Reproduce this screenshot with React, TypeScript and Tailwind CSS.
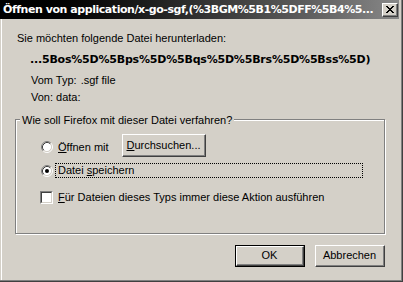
import React from "react";

const CloseGlyph = () => (
  <svg width="8" height="7" viewBox="0 0 8 7" shapeRendering="crispEdges">
    <path
      d="M0 0h2v1H0zM6 0h2v1H6zM1 1h2v1H1zM5 1h2v1H5zM2 2h4v1H2zM3 3h2v1H3zM2 4h4v1H2zM1 5h2v1H1zM5 5h2v1H5zM0 6h2v1H0zM6 6h2v1H6z"
      fill="#000"
    />
  </svg>
);

const Radio = ({ checked }: { checked?: boolean }) => (
  <svg width="12" height="12" viewBox="0 0 12 12" className="shrink-0 block">
    <circle cx="6" cy="6" r="4.5" fill="#fff" />
    <path d="M2.11 9.89A5.5 5.5 0 0 1 9.89 2.11" stroke="#808080" strokeWidth="1" fill="none" />
    <path d="M9.89 2.11A5.5 5.5 0 0 1 2.11 9.89" stroke="#ffffff" strokeWidth="1" fill="none" />
    <path d="M2.82 9.18A4.5 4.5 0 0 1 9.18 2.82" stroke="#404040" strokeWidth="1" fill="none" />
    <path d="M9.18 2.82A4.5 4.5 0 0 1 2.82 9.18" stroke="#d4d0c8" strokeWidth="1" fill="none" />
    {checked && <circle cx="6" cy="6" r="2" fill="#000" />}
  </svg>
);

const Checkbox = () => (
  <div className="w-[13px] h-[13px] shrink-0 border border-t-[#808080] border-l-[#808080] border-b-white border-r-white">
    <div className="w-full h-full bg-white border border-t-[#404040] border-l-[#404040] border-b-[#d4d0c8] border-r-[#d4d0c8]" />
  </div>
);

export default function App() {
  return (
    <div className="w-[403px] h-[282px] bg-[#d4d0c8] border-r border-b border-[#404040] overflow-hidden text-black text-[11px] leading-[13px] font-['Liberation_Sans',Arial,sans-serif]">
      <div className="h-full border-r border-b border-[#808080] flex flex-col">
        {/* Title bar */}
        <div className="h-[19px] mr-[2px] shrink-0 flex items-center pl-[3px] pr-[1px] bg-gradient-to-r from-[#000000] to-[#888888]">
          <span className="flex-1 whitespace-nowrap text-white font-bold text-[11px] tracking-[-0.45px] font-['DejaVu_Sans',sans-serif]">
            Öffnen von application/x-go-sgf,(%3BGM%5B1%5DFF%5B4%5...
          </span>
          <div className="w-[16px] h-[14px] ml-[6px] shrink-0 border border-t-white border-l-white border-r-[#404040] border-b-[#404040]">
            <div className="w-full h-full bg-[#d4d0c8] border-r border-b border-[#808080] flex items-center justify-center">
              <CloseGlyph />
            </div>
          </div>
        </div>

        {/* Body */}
        <div className="flex-1 flex flex-col ml-[1px] border-l border-white pl-[13px] pr-[15px]">
          <div className="mt-[13px] pl-[2px]">Sie möchten folgende Datei herunterladen:</div>
          <div className="mt-[8px] pl-[15px] font-bold tracking-[-0.2px] font-['DejaVu_Sans',sans-serif] whitespace-nowrap">
            ...5Bos%5D%5Bps%5D%5Bqs%5D%5Brs%5D%5Bss%5D)
          </div>
          <div className="mt-[8px] pl-[16px] flex">
            <span>Vom Typ:</span>
            <span className="ml-[4px]">.sgf file</span>
          </div>
          <div className="mt-[4px] pl-[16px] flex">
            <span>Von:</span>
            <span className="ml-[3px]">data:</span>
          </div>

          {/* Group box */}
          <div className="relative mt-[15px] w-[370px] h-[115px] border border-[#808080] shadow-[inset_1px_1px_0_#ffffff,1px_1px_0_#ffffff] pl-[25px] pt-[14px] flex flex-col">
            <span className="absolute left-[4px] top-[-6px] px-[2px] bg-[#d4d0c8] whitespace-nowrap">
              Wie soll Firefox mit dieser Datei verfahren?
            </span>

            <div className="flex items-start h-[23px]">
              <div className="mt-[7px]">
                <Radio />
              </div>
              <span className="mt-[7px] ml-[5px] w-[64px] whitespace-nowrap">
                <u className="underline-offset-[1px]">Ö</u>ffnen mit
              </span>
              <div className="w-[84px] h-[23px] border border-t-white border-l-white border-r-[#404040] border-b-[#404040]">
                <div className="w-full h-full border-r border-b border-[#808080] flex items-center justify-center">
                  <span>
                    <u className="underline-offset-[1px]">D</u>urchsuchen...
                  </span>
                </div>
              </div>
            </div>

            <div className="flex items-center mt-[6px]">
              <Radio checked />
              <div className="ml-[2px] w-[308px] h-[15px] border border-dotted border-black pl-[2px] whitespace-nowrap">
                Datei <u className="underline-offset-[1px]">s</u>peichern
              </div>
            </div>

            <div className="flex items-center mt-[13px] ml-[-1px]">
              <Checkbox />
              <span className="ml-[5px] whitespace-nowrap">
                <u className="underline-offset-[1px]">F</u>ür Dateien dieses Typs immer diese Aktion ausführen
              </span>
            </div>
          </div>

          {/* Buttons */}
          <div className="mt-[11px] flex justify-end gap-[10px] pr-[1px]">
            <div className="w-[70px] h-[22px] border border-black">
              <div className="w-full h-full border border-t-white border-l-white border-r-[#404040] border-b-[#404040]">
                <div className="w-full h-full border-r border-b border-[#808080] flex items-center justify-center">
                  OK
                </div>
              </div>
            </div>
            <div className="w-[70px] h-[22px] border border-t-white border-l-white border-r-[#404040] border-b-[#404040]">
              <div className="w-full h-full border-r border-b border-[#808080] flex items-center justify-center">
                Abbrechen
              </div>
            </div>
          </div>
        </div>
      </div>
    </div>
  );
}
